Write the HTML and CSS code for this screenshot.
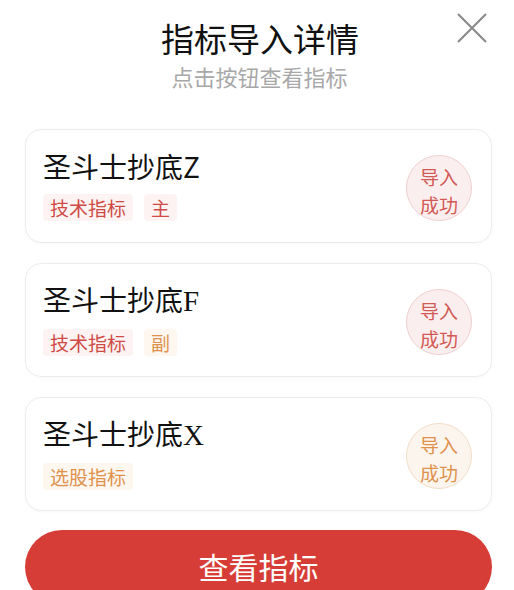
FILE: index.html
```html
<!DOCTYPE html>
<html lang="zh-CN">
<head>
  <meta charset="UTF-8">
  <meta name="viewport" content="width=device-width, initial-scale=1.0">
  <title>指标导入详情</title>
  <link rel="stylesheet" href="styles.css">
</head>
<body>
  <div class="sheet">
    <div class="header">
      <h1 class="title">指标导入详情</h1>
      <p class="subtitle">点击按钮查看指标</p>
      <span class="close">
        <svg width="32" height="30" viewBox="0 0 32 30">
          <path d="M2 1 L30 29 M30 1 L2 29" stroke="#8c8c8c" stroke-width="2.2" fill="none"/>
        </svg>
      </span>
    </div>

    <div class="list">
      <div class="card">
        <div class="info">
          <div class="name">圣斗士抄底Z</div>
          <div class="tags">
            <span class="tag red">技术指标</span>
            <span class="tag red">主</span>
          </div>
        </div>
        <div class="badge red">导入<br>成功</div>
      </div>

      <div class="card">
        <div class="info">
          <div class="name">圣斗士抄底<span class="serif">F</span></div>
          <div class="tags">
            <span class="tag red">技术指标</span>
            <span class="tag orange">副</span>
          </div>
        </div>
        <div class="badge red">导入<br>成功</div>
      </div>

      <div class="card">
        <div class="info">
          <div class="name">圣斗士抄底<span class="serif">X</span></div>
          <div class="tags">
            <span class="tag orange">选股指标</span>
          </div>
        </div>
        <div class="badge orange">导入<br>成功</div>
      </div>
    </div>

    <button class="view-btn" type="button">查看指标</button>
  </div>
</body>
</html>
```

FILE: styles.css
```css
body {
  margin: 0;
  padding: 0;
  background-color: #fff;
  font-family: "Noto Sans CJK SC", "Noto Sans", sans-serif;
  overflow: hidden;
}
.sheet {
  padding: 0 22px 0 25px;
}
.header {
  position: relative;
  text-align: center;
  padding-top: 18px;
  height: 110px;
  box-sizing: border-box;
}
.title {
  margin: 0;
  font-size: 33px;
  line-height: 40px;
  font-weight: normal;
  color: #111;
  margin-left: 3px;
}
.subtitle {
  margin: 3px 0 0;
  font-size: 22px;
  line-height: 30px;
  color: #a8a8a8;
  margin-left: 2px;
}
.close {
  position: absolute;
  top: 13px;
  right: 4px;
  line-height: 0;
}
.list {
  display: flex;
  flex-direction: column;
  gap: 20px;
  margin-top: 19px;
}
.card {
  display: flex;
  align-items: center;
  justify-content: space-between;
  height: 114px;
  box-sizing: border-box;
  padding: 0 19px 0 17px;
  border: 1px solid #ececec;
  border-radius: 16px;
  box-shadow: 0 1px 3px rgba(0, 0, 0, 0.03);
}
.info {
  margin-top: -3px;
}
.name {
  font-size: 28px;
  line-height: 36px;
  color: #111;
}
.serif {
  font-family: "Liberation Serif", serif;
  font-size: 29px;
}
.tags {
  display: flex;
  gap: 11px;
  margin-top: 10px;
}
.tag {
  font-size: 19px;
  line-height: 27px;
  padding: 0 7px;
  border-radius: 4px;
}
.tag.red {
  color: #cf4b46;
  background-color: #fdf3f2;
}
.tag.orange {
  color: #e0924d;
  background-color: #fdf7f0;
}
.badge {
  width: 66px;
  height: 66px;
  box-sizing: border-box;
  border-radius: 50%;
  display: flex;
  align-items: center;
  justify-content: center;
  text-align: center;
  font-size: 19px;
  line-height: 28px;
  margin-top: 4px;
  padding-top: 6px;
}
.badge.red {
  color: #d25a55;
  background-color: #fbeeee;
  border: 1px solid #efcfcf;
}
.badge.orange {
  color: #e0924d;
  background-color: #fcf5ee;
  border: 1px solid #f1dcc7;
}
.view-btn {
  display: block;
  width: 100%;
  height: 74px;
  margin-top: 19px;
  padding-bottom: 4px;
  border: none;
  border-radius: 37px;
  background-color: #d73d37;
  color: #fff;
  font-family: "Noto Sans CJK SC", sans-serif;
  font-size: 30px;
  cursor: pointer;
}
```
